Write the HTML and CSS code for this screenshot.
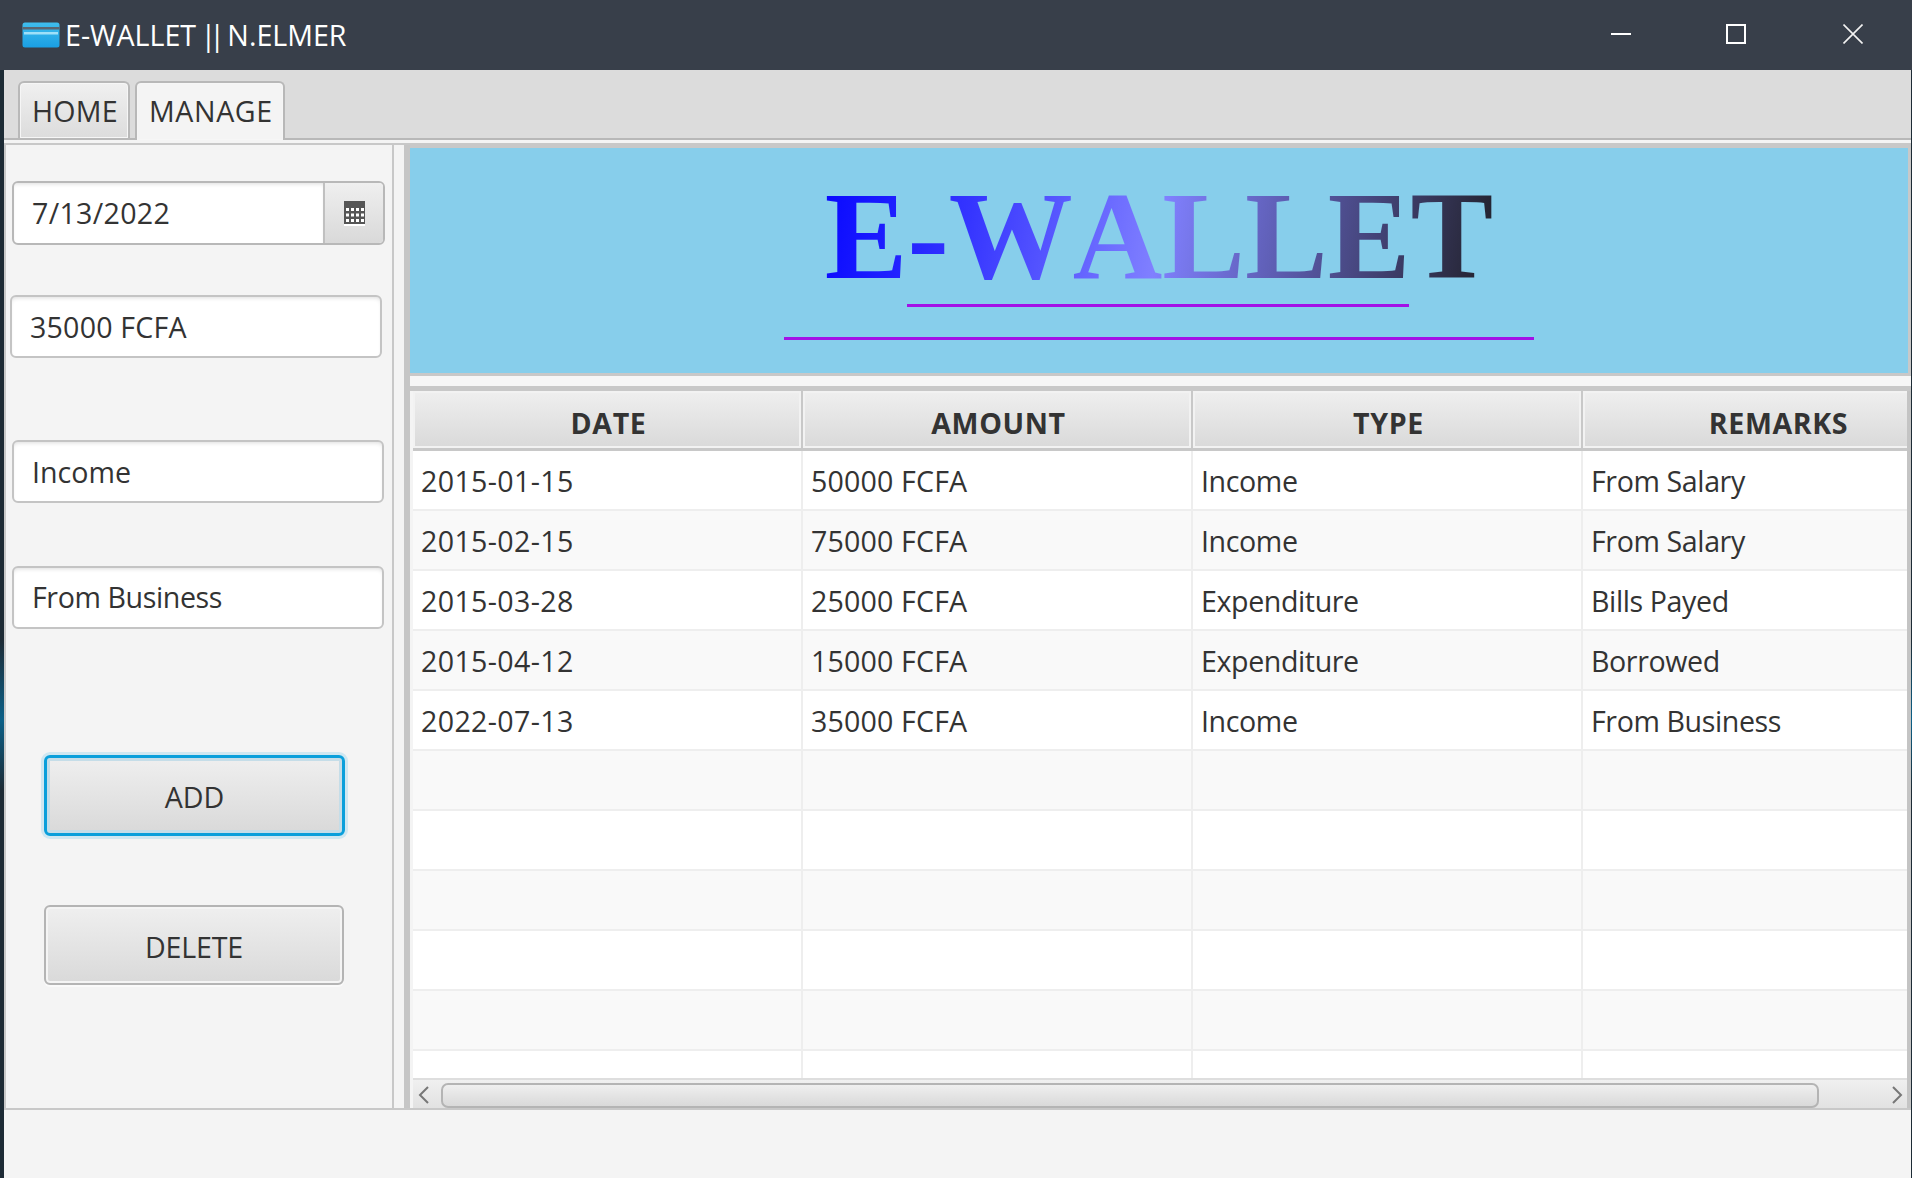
FILE: index.html
```html
<!DOCTYPE html>
<html lang="en">
<head>
<meta charset="utf-8">
<title>E-WALLET || N.ELMER</title>
<link rel="stylesheet" href="styles.css">
</head>
<body>
<div class="window">
  <header class="titlebar">
    <svg class="app-icon" width="38" height="26" viewBox="0 0 38 26">
      <defs><linearGradient id="card" x1="0" y1="0" x2="0" y2="1"><stop offset="0" stop-color="#3fbdec"/><stop offset="1" stop-color="#1a9fe4"/></linearGradient></defs>
      <rect x="0.5" y="0.5" width="37" height="25" rx="2.5" fill="url(#card)"/>
      <rect x="0.5" y="5" width="37" height="2.5" fill="#5a6570"/>
      <rect x="2" y="10" width="34" height="2.5" fill="#9fe0f8"/>
    </svg>
    <span class="title">E-WALLET <span class="bars">||</span> N.ELMER</span>
    <div class="window-controls">
      <svg class="ctl ctl-min" width="20" height="20" viewBox="0 0 20 20"><rect x="0" y="9" width="20" height="2" fill="#fff"/></svg>
      <svg class="ctl ctl-max" width="20" height="20" viewBox="0 0 20 20"><rect x="1" y="1" width="18" height="18" fill="none" stroke="#fff" stroke-width="2"/></svg>
      <svg class="ctl ctl-close" width="20" height="20" viewBox="0 0 20 20"><path d="M0.5 0.5 L19.5 19.5 M19.5 0.5 L0.5 19.5" stroke="#f2f2f2" stroke-width="1.6" fill="none"/></svg>
    </div>
  </header>

  <nav class="tabbar">
    <div class="tab">HOME</div>
    <div class="tab tab-active">MANAGE</div>
  </nav>

  <main class="content">
    <aside class="form-panel">
      <div class="date-picker">
        <div class="date-value">7/13/2022</div>
        <div class="date-button">
          <svg width="21" height="25" viewBox="0 0 21 25">
            <rect width="21" height="23" fill="#555"/>
            <rect y="23" width="21" height="2" fill="#fff"/>
            <g class="cal-dots">
              <rect x="2" y="7" width="3" height="3"/><rect x="7" y="7" width="3" height="3"/><rect x="12" y="7" width="3" height="3"/><rect x="17" y="7" width="3" height="3"/>
              <rect x="2" y="12.5" width="3" height="3"/><rect x="7" y="12.5" width="3" height="3"/><rect x="12" y="12.5" width="3" height="3"/><rect x="17" y="12.5" width="3" height="3"/>
              <rect x="2" y="18" width="3" height="3"/><rect x="7" y="18" width="3" height="3"/><rect x="12" y="18" width="3" height="3"/><rect x="17" y="18" width="3" height="3"/>
            </g>
          </svg>
        </div>
      </div>
      <div class="field field-amount">35000 FCFA</div>
      <div class="field field-type">Income</div>
      <div class="field field-remarks">From Business</div>
      <button class="btn btn-add" type="button">ADD</button>
      <button class="btn btn-delete" type="button">DELETE</button>
    </aside>

    <div class="divider"></div>

    <section class="right-panel">
      <div class="banner">
        <div class="banner-title">E-WALLET</div>
        <div class="rule rule-short"></div>
        <div class="rule rule-long"></div>
      </div>
      <div class="hdivider"></div>
      <div class="table">
        <div class="thead">
          <div class="th">DATE</div><div class="th">AMOUNT</div><div class="th">TYPE</div><div class="th">REMARKS</div>
        </div>
        <div class="tbody">
          <div class="tr"><div class="td">2015-01-15</div><div class="td">50000 FCFA</div><div class="td">Income</div><div class="td">From Salary</div></div>
          <div class="tr"><div class="td">2015-02-15</div><div class="td">75000 FCFA</div><div class="td">Income</div><div class="td">From Salary</div></div>
          <div class="tr"><div class="td">2015-03-28</div><div class="td">25000 FCFA</div><div class="td">Expenditure</div><div class="td">Bills Payed</div></div>
          <div class="tr"><div class="td">2015-04-12</div><div class="td">15000 FCFA</div><div class="td">Expenditure</div><div class="td">Borrowed</div></div>
          <div class="tr"><div class="td">2022-07-13</div><div class="td">35000 FCFA</div><div class="td">Income</div><div class="td">From Business</div></div>
          <div class="tr"><div class="td"></div><div class="td"></div><div class="td"></div><div class="td"></div></div>
          <div class="tr"><div class="td"></div><div class="td"></div><div class="td"></div><div class="td"></div></div>
          <div class="tr"><div class="td"></div><div class="td"></div><div class="td"></div><div class="td"></div></div>
          <div class="tr"><div class="td"></div><div class="td"></div><div class="td"></div><div class="td"></div></div>
          <div class="tr"><div class="td"></div><div class="td"></div><div class="td"></div><div class="td"></div></div>
          <div class="tr"><div class="td"></div><div class="td"></div><div class="td"></div><div class="td"></div></div>
        </div>
        <div class="scrollbar">
          <svg class="arrow" width="12" height="20" viewBox="0 0 12 20"><path d="M10 2 L2 10 L10 18" fill="none" stroke="#777" stroke-width="2"/></svg>
          <div class="thumb"></div>
          <svg class="arrow" width="12" height="20" viewBox="0 0 12 20"><path d="M2 2 L10 10 L2 18" fill="none" stroke="#777" stroke-width="2"/></svg>
        </div>
      </div>
    </section>
  </main>
  <footer class="status"></footer>
</div>
</body>
</html>
```
FILE: styles.css
```css
* { box-sizing: border-box; }
html, body { margin: 0; height: 100%; overflow: hidden; }
body { background: linear-gradient(#1d2b35 0 640px, #0b6088 720px, #1d2b35 790px); font-family: "Open Sans", "Liberation Sans", sans-serif; color: #333; }
.window { height: 1178px; width: 1912px; display: flex; flex-direction: column; padding-right: 1px; }

.titlebar { height: 70px; flex: none; background: #383f4a; display: flex; align-items: center; margin-right: -1px; padding-left: 22px; color: #fff; }
.app-icon { flex: none; margin-right: 5px; }
.title { font-size: 28.6px; padding-bottom: 2px; white-space: nowrap; }
.bars { letter-spacing: -7px; margin-right: 2px; margin-left: -3px; }
.window-controls { margin-left: auto; display: flex; align-items: center; padding-bottom: 2px; }
.ctl { display: block; flex: none; }
.ctl-min { margin-right: 95px; }
.ctl-max { margin-right: 97px; }
.ctl-close { margin-right: 49px; }

.tabbar { height: 70px; flex: none; margin-left: 4px; background: #dcdcdc; border-bottom: 2px solid #b8b8b8; display: flex; align-items: flex-end; gap: 5px; padding-left: 14px; }
.tab { height: 57px; padding: 0 0 0 12px; width: 112px; font-size: 28.6px; letter-spacing: .2px; line-height: 55px; border: 2px solid #b8b8b8; border-bottom: 0; border-radius: 6px 6px 0 0; background: linear-gradient(#f0f0f0, #dcdcdc); box-shadow: inset 0 0 0 1px #f6f6f6; white-space: nowrap; }
.tab-active { width: 150px; height: 59px; margin-bottom: -2px; background: #f4f4f4; letter-spacing: .6px; }

.content { height: 970px; flex: none; margin-left: 4px; padding-top: 3px; background: #f4f4f4; border-bottom: 2px solid #c8c8c8; display: flex; }
.form-panel { width: 390px; flex: none; border-top: 2px solid #c8c8c8; border-left: 2px solid #c8c8c8; border-right: 2px solid #c8c8c8; display: flex; flex-direction: column; align-items: flex-start; padding: 36px 0 0 5px; }

.date-picker { width: 373px; height: 64px; margin-left: 1px; flex: none; display: flex; border: 2px solid #b8b8b8; border-radius: 6px; background: #fff; overflow: hidden; }
.date-value { flex: 1; font-size: 28.6px; letter-spacing: .3px; line-height: 60px; padding-left: 18px; box-shadow: inset 0 3px 4px -2px #ddd; }
.date-button { width: 60px; flex: none; border-left: 2px solid #c0c0c0; background: linear-gradient(#efefef, #d9d9d9); display: flex; align-items: center; justify-content: center; padding-top: 1px; }
.cal-dots rect { fill: #fff; }

.field { height: 63px; width: 372px; flex: none; border: 2px solid #c4c4c4; border-radius: 6px; background: #fff; font-size: 28.6px; line-height: 60px; padding-left: 18px; box-shadow: inset 0 3px 4px -2px #ddd; }
.field-amount { margin-top: 50px; margin-left: -1px; letter-spacing: .2px; }
.field-type { margin-top: 82px; margin-left: 1px; }
.field-remarks { margin-top: 63px; margin-left: 1px; letter-spacing: -.4px; line-height: 58px; }

.btn { display: block; flex: none; font: inherit; font-size: 28.6px; color: #333; border-radius: 6px; background: linear-gradient(#efefef, #d9d9d9); padding: 2px 0 0; }
.btn-add { width: 301px; height: 81px; margin-top: 126px; margin-left: 33px; border: 3px solid #0a9fdb; box-shadow: 0 0 0 3px #cfe7f1, inset 0 0 0 3px #c5dde8; }
.btn-delete { width: 300px; height: 80px; margin-top: 69px; margin-left: 33px; border: 2px solid #b4b4b4; letter-spacing: -.2px; box-shadow: inset 0 0 0 2px #f4f4f4, 0 2px 0 #fafafa; }

.divider { width: 16px; flex: none; border-top: 2px solid #c8c8c8; background: linear-gradient(90deg, #f4f4f4 0 10px, #c6c6c6 10px); }

.right-panel { flex: 1; min-width: 0; display: flex; flex-direction: column; }
.banner { height: 233px; flex: none; border-top: 5px solid #c8c8c8; border-bottom: 3px solid #c8c8c8; border-right: 3px solid #c8c8c8; background: #87ceeb; display: flex; flex-direction: column; align-items: center; }
.banner-title { margin-top: 27px; font-family: "Liberation Serif", "Times New Roman", serif; font-weight: 700; font-size: 124px; line-height: 124px; font-kerning: none; background: linear-gradient(100deg, #0808ff 0%, #3535ff 22%, #8080ff 50%, #55559f 72%, #202028 100%); -webkit-background-clip: text; background-clip: text; color: transparent; white-space: nowrap; }
.rule { height: 3px; background: #a311e6; flex: none; }
.rule-short { width: 502px; margin: 5px 3px 0 0; }
.rule-long { width: 750px; margin: 30px 1px 0 0; }

.hdivider { height: 15px; flex: none; background: linear-gradient(#f6f6f6 0 10px, #c8c8c8 10px); }

.table { flex: 1; min-height: 0; display: flex; flex-direction: column; overflow: hidden; margin-left: 3px; border-right: 4px solid #c4c4c4; background: #fff; }
.thead { display: flex; height: 60px; flex: none; border-bottom: 3px solid #c8c8c8; }
.th { width: 390px; flex: none; padding-left: 3px; text-align: center; font-size: 28.6px; font-weight: 700; letter-spacing: .6px; line-height: 63px; background: linear-gradient(#efefef, #d9d9d9); box-shadow: inset 0 0 0 2px #f2f2f2; border-right: 2px solid #c8c8c8; }
.tbody { flex: 1; min-height: 0; overflow: hidden; }
.tr { display: flex; height: 60px; border-bottom: 2px solid #eeeeee; }
.tr:nth-child(even) { background: #f9f9f9; }
.td { width: 390px; flex: none; padding-left: 8px; font-size: 28.6px; line-height: 60px; border-right: 2px solid #eeeeee; white-space: nowrap; }
.td:nth-child(1) { letter-spacing: .35px; }
.td:nth-child(2) { letter-spacing: .15px; }
.td:nth-child(3), .td:nth-child(4) { letter-spacing: -.4px; }

.scrollbar { height: 30px; flex: none; display: flex; align-items: flex-end; border-top: 2px solid #dedede; background: linear-gradient(#f0f0f0, #e2e2e2); padding: 0 4px 0 5px; }
.arrow { flex: none; display: block; margin-bottom: 3px; }
.thumb { width: 1378px; height: 25px; margin: 0 auto 0 11px; border: 2px solid #b4b4b4; border-radius: 7px; background: linear-gradient(#efefef, #d9d9d9); }

.status { flex: 1; margin-left: 4px; background: #f4f4f4; }
```
